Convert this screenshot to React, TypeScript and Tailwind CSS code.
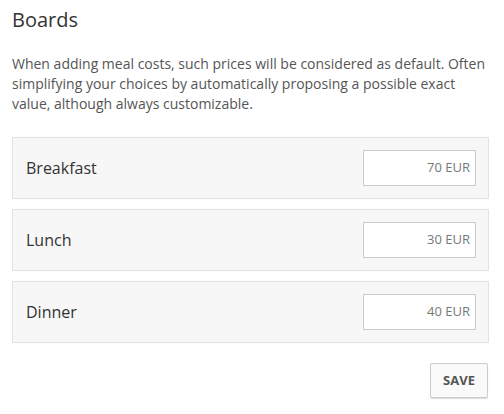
import React from "react";

const meals = [
  { name: "Breakfast", value: "70 EUR" },
  { name: "Lunch", value: "30 EUR" },
  { name: "Dinner", value: "40 EUR" },
];

export default function App() {
  return (
    <div
      className="w-[504px] h-[414px] bg-white pl-3 pr-[15px] pt-[6px]"
      style={{ fontFamily: '"Open Sans", "Noto Sans", sans-serif' }}
    >
      <h1 className="text-[20px] leading-[28px] font-normal text-[#333333]">Boards</h1>
      <p className="mt-5 text-[14px] leading-[20px] text-[#555555]">
        When adding meal costs, such prices will be considered as default. Often simplifying your
        choices by automatically proposing a possible exact value, although always customizable.
      </p>
      <div className="mt-[23px] flex flex-col gap-[10px]">
        {meals.map((m) => (
          <div
            key={m.name}
            className="flex items-center justify-between border border-[#e3e3e3] bg-[#f7f7f7] pl-[13px] pr-[12px] py-[12px]"
          >
            <span className="text-[16px] text-[#333333]">{m.name}</span>
            <div className="w-[113px] h-9 border border-[#cccccc] bg-white flex items-center justify-end pr-[5px] text-[13px] text-[#777777]">
              {m.value}
            </div>
          </div>
        ))}
      </div>
      <div className="mt-5 flex justify-end pr-px">
        <button className="h-[35px] w-[58px] border border-[#cccccc] bg-[#fafafa] rounded-[2px] text-[13px] font-bold text-[#555555] shadow-[0_1px_1px_rgba(0,0,0,0.15)]">
          SAVE
        </button>
      </div>
    </div>
  );
}
